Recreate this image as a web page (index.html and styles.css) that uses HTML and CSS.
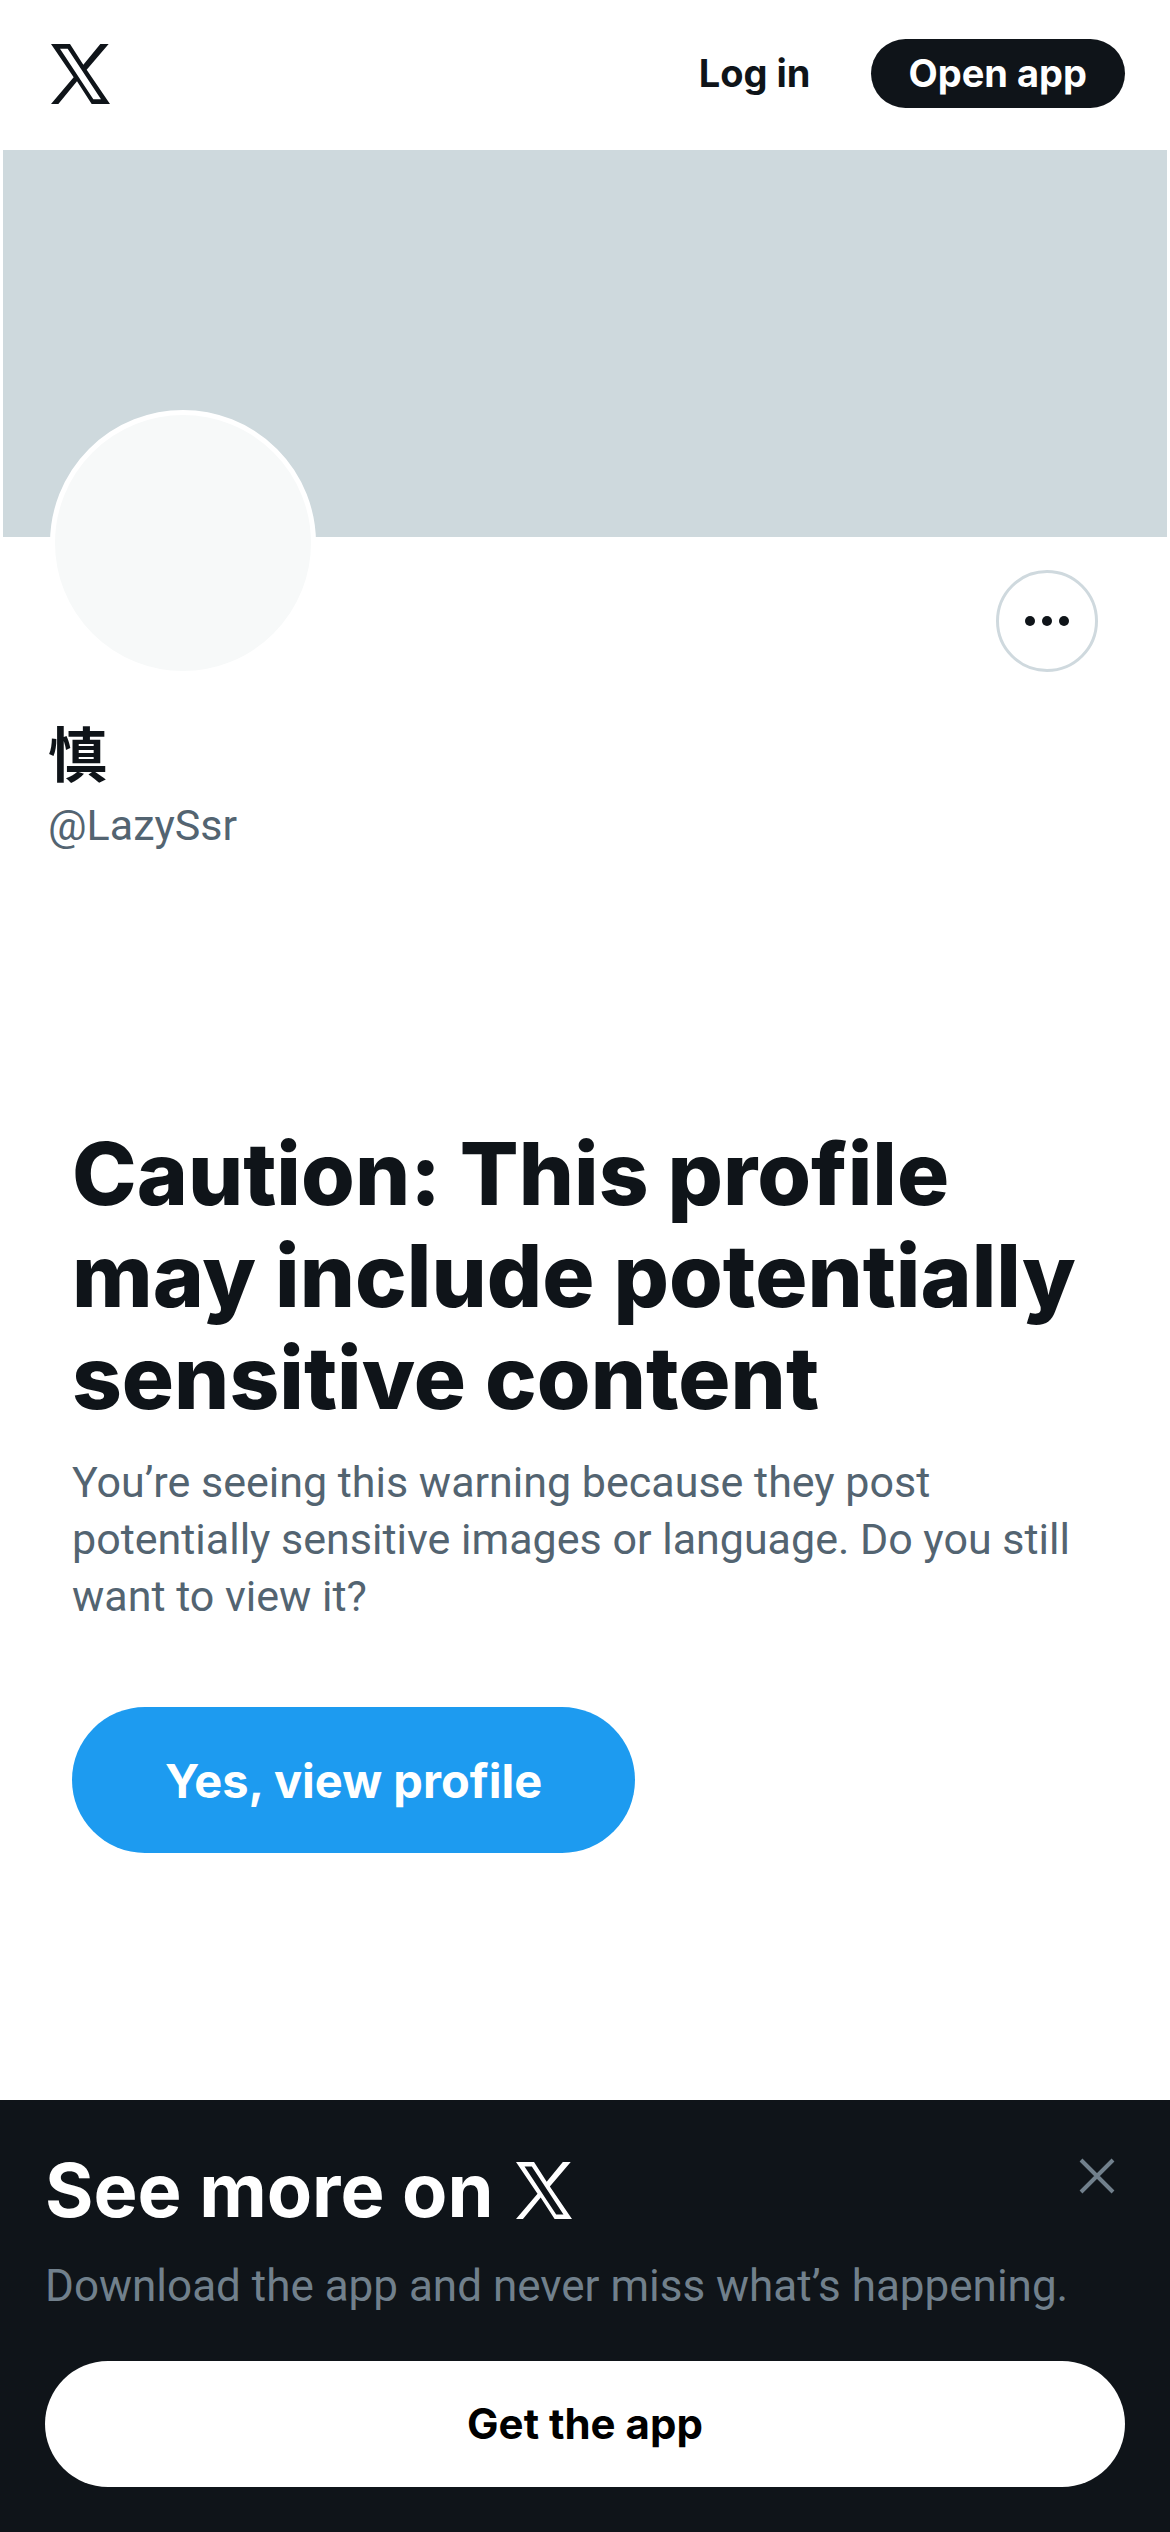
FILE: index.html
```html
<!DOCTYPE html>
<html lang="en">
<head>
    <meta charset="UTF-8">
    <meta name="viewport" content="width=device-width, initial-scale=1.0">
    <title>慎 (@LazySsr) / X</title>
    <link rel="stylesheet" href="styles.css">
</head>
<body>

    <!-- Shared logo -->
    <svg class="sprite" aria-hidden="true">
        <symbol id="logo" viewBox="0 0 177 180">
            <path fill-rule="evenodd" d="M0 0H57L97 62L148 0H173L107 77L177 180H122L78 112L22 180H0L68 100ZM27 14L127 166H150L50 14Z"/>
        </symbol>
    </svg>

    <!-- Header -->
    <header class="topbar">
        <a href="#" class="topbar-logo" aria-label="X">
            <svg class="logo" aria-hidden="true"><use href="#logo"/></svg>
        </a>
        <nav class="topbar-nav">
            <a href="#" class="login">Log in</a>
            <a href="#" class="open-app">Open app</a>
        </nav>
    </header>

    <!-- Profile -->
    <main>
        <section class="profile">
            <div class="banner"></div>
            <div class="profile-row">
                <div class="avatar"></div>
                <button type="button" class="more" aria-label="More">
                    <svg viewBox="0 0 44 10" aria-hidden="true">
                        <circle cx="5" cy="5" r="5"/>
                        <circle cx="22" cy="5" r="5"/>
                        <circle cx="39" cy="5" r="5"/>
                    </svg>
                </button>
            </div>
            <div class="names">
                <h2 lang="ja">慎</h2>
                <p>@LazySsr</p>
            </div>
        </section>

        <!-- Sensitive content warning -->
        <section class="warning">
            <h1>Caution: This profile may include potentially sensitive content</h1>
            <p>You’re seeing this warning because they post potentially sensitive images or language. Do you still want to view it?</p>
            <button type="button" class="view-profile">Yes, view profile</button>
        </section>
    </main>

    <!-- App banner -->
    <aside class="app-sheet">
        <div class="sheet-head">
            <h2>See more on <svg class="logo" role="img" aria-label="X"><use href="#logo"/></svg></h2>
            <button type="button" class="close" aria-label="Close">
                <svg viewBox="0 0 36 36" aria-hidden="true"><path d="M2 2L34 34M34 2L2 34"/></svg>
            </button>
        </div>
        <p>Download the app and never miss what’s happening.</p>
        <a href="#" class="get-app">Get the app</a>
    </aside>

</body>
</html>
```
FILE: styles.css
```css
/* Reset some default browser styles */
* {
    box-sizing: border-box;
}

body, h1, h2, p {
    margin: 0;
}

a {
    color: inherit;
    text-decoration: none;
}

button {
    border: none;
    padding: 0;
    background: none;
    cursor: pointer;
}

body {
    display: flex;
    flex-direction: column;
    min-height: 100vh;
    background-color: #fff;
    color: #0f1419;
    font-family: Roboto, "Noto Sans CJK JP", sans-serif;
    font-size: 43px;
    line-height: 57px;
}

h1, h2, .topbar-nav, .view-profile, .get-app {
    font-family: Inter, "Noto Sans CJK JP", sans-serif;
    font-weight: 700;
}

.sprite {
    display: none;
}

.logo {
    display: block;
    width: 59px;
    height: 60px;
    fill: currentColor;
}

/* Header */
.topbar {
    display: flex;
    justify-content: space-between;
    align-items: center;
    padding: 39px 45px 42px 51px;
}

.topbar-nav {
    display: flex;
    align-items: center;
    gap: 60px;
    font-size: 38px;
    line-height: 69px;
}

.open-app {
    padding: 0 38px;
    border-radius: 35px;
    background-color: #0f1419;
    color: #fff;
}

/* Profile */
.banner {
    height: 387px;
    margin: 0 3px;
    background-color: #ced9dd;
}

.profile-row {
    display: flex;
    justify-content: space-between;
    align-items: flex-start;
    padding: 0 72px 0 50px;
}

.avatar {
    width: 266px;
    height: 266px;
    margin-top: -127px;
    border: 5px solid #fff;
    border-radius: 50%;
    background-color: #f7f9f9;
}

.more {
    display: flex;
    justify-content: center;
    align-items: center;
    width: 102px;
    height: 102px;
    margin-top: 33px;
    border: 3px solid #cfd9de;
    border-radius: 50%;
}

.more svg {
    width: 44px;
    height: 10px;
    fill: #0f1419;
}

.names {
    padding: 40px 48px 0;
}

.names h2 {
    margin-bottom: 9px;
    font-family: "Noto Sans CJK JP", sans-serif;
    font-size: 59px;
    line-height: 72px;
}

.names p,
.warning p {
    color: #536471;
}

/* Sensitive content warning */
.warning {
    padding: 269px 72px 0;
}

.warning h1 {
    margin-bottom: 25px;
    font-size: 87px;
    font-weight: 800;
    line-height: 102px;
}

.view-profile {
    height: 146px;
    margin-top: 82px;
    padding: 0 93px;
    border-radius: 73px;
    background-color: #1d9bf0;
    color: #fff;
    font-size: 47px;
}

/* App banner */
.app-sheet {
    margin-top: auto;
    padding: 45px;
    background-color: #0f1419;
    color: #fff;
}

.sheet-head {
    display: flex;
    justify-content: space-between;
    align-items: flex-start;
    margin-bottom: 23px;
}

.sheet-head h2 {
    display: flex;
    align-items: center;
    gap: 23px;
    font-size: 74px;
    line-height: 90px;
}

.sheet-head .logo {
    width: 56px;
    height: 57px;
}

.close {
    display: flex;
    justify-content: center;
    align-items: center;
    width: 56px;
    height: 62px;
}

.close svg {
    width: 36px;
    height: 36px;
    fill: none;
    stroke: #71808c;
    stroke-width: 4;
}

.app-sheet p {
    margin-bottom: 46px;
    color: #71808c;
    font-size: 44px;
}

.get-app {
    display: block;
    border-radius: 63px;
    background-color: #fff;
    color: #000;
    font-size: 42px;
    line-height: 126px;
    text-align: center;
}
```
